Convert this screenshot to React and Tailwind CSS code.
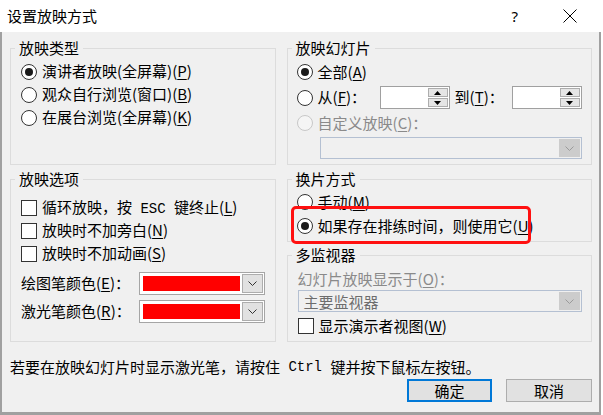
import React from 'react';

const Key = ({ k }) => (
    <span>
        (<span className="underline underline-offset-[2px]">{k}</span>)
    </span>
);

const Mono = ({ children }) => (
    <span className="font-['Liberation_Mono',monospace] text-[14px] whitespace-pre">{children}</span>
);

const Radio = ({ checked, disabled }) => (
    <span
        className={
            disabled
                ? 'w-[16px] h-[16px] shrink-0 rounded-full border border-[#c8c8c8] bg-[#f5f5f5]'
                : 'w-[16px] h-[16px] shrink-0 rounded-full border border-[#333333] bg-white flex items-center justify-center'
        }
    >
        {checked && <span className="w-[8px] h-[8px] rounded-full bg-[#1a1a1a]" />}
    </span>
);

const Check = () => <span className="w-[16px] h-[16px] shrink-0 border border-[#333333] bg-white" />;

const Chevron = ({ color }) => (
    <svg width="9" height="5" viewBox="0 0 9 5">
        <polyline points="0.5,0.5 4.5,4.5 8.5,0.5" fill="none" stroke={color} strokeWidth="1" />
    </svg>
);

// group box: fieldset carries the border, inner div the padding
const Group = ({ title, className, inner, children }) => (
    <fieldset className={className}>
        <legend className="ml-[4px] px-[4px] text-[15px] leading-[16px]">{title}</legend>
        <div className={inner}>{children}</div>
    </fieldset>
);

const Spin = () => (
    <div className="w-[70px] h-[23px] border border-[#a0a0a0] bg-white flex justify-end p-[1px]">
        <div className="w-[20px] flex flex-col gap-[1px]">
            <div className="flex-1 bg-[#e5e5e5] border border-[#adadad] flex items-center justify-center">
                <svg width="7" height="4" viewBox="0 0 7 4"><polygon points="3.5,0 7,4 0,4" fill="#000" /></svg>
            </div>
            <div className="flex-1 bg-[#e5e5e5] border border-[#adadad] flex items-center justify-center">
                <svg width="7" height="4" viewBox="0 0 7 4"><polygon points="0,0 7,0 3.5,4" fill="#000" /></svg>
            </div>
        </div>
    </div>
);

const ColorSelect = () => (
    <div className="w-[126px] h-[23px] border border-[#a5a5a5] bg-white flex p-[1px]">
        <div className="flex-1 m-[2px] bg-[#ff0000]" />
        <div className="w-[21px] bg-[#e1e1e1] border border-[#adadad] flex items-center justify-center">
            <Chevron color="#333333" />
        </div>
    </div>
);

const DisabledSelect = ({ className, text }) => (
    <div className={className}>
        <span className="flex-1 pl-[4px] text-[#6d6d6d] leading-[20px]">{text}</span>
        <div className="w-[21px] bg-[#cccccc] flex items-center justify-center">
            <Chevron color="#9a9a9a" />
        </div>
    </div>
);

const App = () => {
    return (
        <div className="w-[603px] h-[415px] bg-white font-['Noto_Sans_CJK_SC',sans-serif] text-[15px] text-black relative">
            <div className="w-[601px] h-full flex flex-col">
                {/* title bar */}
                <div className="h-[32px] shrink-0 flex items-center pl-[7px] pr-[24px] bg-white">
                    <span className="text-[15px] leading-[20px]">设置放映方式</span>
                    <span className="ml-auto text-[15px] leading-[20px] font-['Noto_Sans',sans-serif]">?</span>
                    <span className="ml-[45px]">
                        <svg width="14" height="14" viewBox="0 0 14 14">
                            <path d="M0.5 0.5 L13.5 13.5 M13.5 0.5 L0.5 13.5" stroke="#000" strokeWidth="1" />
                        </svg>
                    </span>
                </div>

                {/* body */}
                <div className="flex-1 bg-[#f0f0f0] border-l-2 border-r-2 border-b-[3px] border-[#a0a0a0] pt-[8px] pl-[8px] pr-[7px] flex flex-col">
                    <div className="flex gap-[11px]">
                        {/* left column */}
                        <div className="w-[266px] flex flex-col gap-[6px]">
                            <Group title="放映类型" className="h-[125px] border border-[#dcdcdc]" inner="pl-[10px] pt-[4px]">
                                <div className="h-[23px] flex items-center gap-[5px]">
                                    <Radio checked />
                                    <span>演讲者放映(全屏幕)<Key k="P" /></span>
                                </div>
                                <div className="h-[23px] flex items-center gap-[5px]">
                                    <Radio />
                                    <span>观众自行浏览(窗口)<Key k="B" /></span>
                                </div>
                                <div className="h-[23px] flex items-center gap-[5px]">
                                    <Radio />
                                    <span>在展台浏览(全屏幕)<Key k="K" /></span>
                                </div>
                            </Group>

                            <Group title="放映选项" className="h-[171px] border border-[#dcdcdc]" inner="pl-[10px] pt-[9px]">
                                <div className="h-[23px] flex items-center gap-[5px]">
                                    <Check />
                                    <span>循环放映，按<Mono> ESC </Mono>键终止<Key k="L" /></span>
                                </div>
                                <div className="h-[23px] flex items-center gap-[5px]">
                                    <Check />
                                    <span>放映时不加旁白<Key k="N" /></span>
                                </div>
                                <div className="h-[23px] flex items-center gap-[5px]">
                                    <Check />
                                    <span>放映时不加动画<Key k="S" /></span>
                                </div>
                                <div className="mt-[7px] flex flex-col gap-[5px]">
                                    <div className="h-[23px] flex items-center">
                                        <span className="w-[118px]">绘图笔颜色<Key k="E" />：</span>
                                        <ColorSelect />
                                    </div>
                                    <div className="h-[23px] flex items-center">
                                        <span className="w-[118px]">激光笔颜色<Key k="R" />：</span>
                                        <ColorSelect />
                                    </div>
                                </div>
                            </Group>
                        </div>

                        {/* right column */}
                        <div className="w-[306px] flex flex-col">
                            <Group title="放映幻灯片" className="h-[125px] border border-[#dcdcdc]" inner="pl-[9px] pt-[4px]">
                                <div className="h-[24px] flex items-center gap-[5px]">
                                    <Radio checked />
                                    <span>全部<Key k="A" /></span>
                                </div>
                                <div className="h-[27px] flex items-center">
                                    <Radio />
                                    <span className="ml-[5px] w-[62px]">从<Key k="F" />：</span>
                                    <Spin />
                                    <span className="ml-[5px] w-[57px]">到<Key k="T" />：</span>
                                    <Spin />
                                </div>
                                <div className="h-[24px] flex items-center gap-[5px] text-[#8a8a8a]">
                                    <Radio disabled />
                                    <span>自定义放映<Key k="C" />：</span>
                                </div>
                                <DisabledSelect className="ml-[23px] mt-[2px] w-[262px] h-[22px] border border-[#b4c0d2] bg-[#f0f0f0] flex p-[1px]" text="" />
                            </Group>

                            <Group title="换片方式" className="mt-[6px] h-[71px] border border-[#dcdcdc]" inner="pl-[9px] pt-[3px]">
                                <div className="h-[24px] flex items-center gap-[5px]">
                                    <Radio />
                                    <span>手动<Key k="M" /></span>
                                </div>
                                <div className="h-[24px] flex items-center gap-[5px]">
                                    <Radio checked />
                                    <span>如果存在排练时间，则使用它<Key k="U" /></span>
                                </div>
                            </Group>

                            <Group title="多监视器" className="mt-[5px] h-[95px] border border-[#dcdcdc]" inner="pl-[10px] pt-[6px]">
                                <div className="h-[21px] flex items-center text-[#8a8a8a]">
                                    <span>幻灯片放映显示于<Key k="O" />：</span>
                                </div>
                                <DisabledSelect className="w-[284px] h-[22px] border border-[#b4c0d2] bg-[#f0f0f0] flex p-[1px]" text="主要监视器" />
                                <div className="mt-[2px] h-[24px] flex items-center gap-[5px]">
                                    <Check />
                                    <span>显示演示者视图<Key k="W" /></span>
                                </div>
                            </Group>
                        </div>
                    </div>

                    {/* footer */}
                    <div className="mt-[15px] h-[20px] flex items-center leading-[20px]">
                        若要在放映幻灯片时显示激光笔，请按住<Mono> Ctrl </Mono>键并按下鼠标左按钮。
                    </div>
                    <div className="mt-[2px] flex justify-end gap-[14px]">
                        <button className="w-[85px] h-[23px] border-2 border-[#0078d7] bg-[#e1e1e1] flex items-center justify-center leading-[18px]">
                            确定
                        </button>
                        <button className="w-[86px] h-[23px] border border-[#adadad] bg-[#e1e1e1] flex items-center justify-center leading-[18px]">
                            取消
                        </button>
                    </div>
                </div>
            </div>

            {/* red highlight annotation */}
            <div className="absolute left-[291px] top-[206px] w-[240px] h-[38px] border-[3px] border-[#ff1010] rounded-[5px] pointer-events-none" />
        </div>
    );
};

export default App;
